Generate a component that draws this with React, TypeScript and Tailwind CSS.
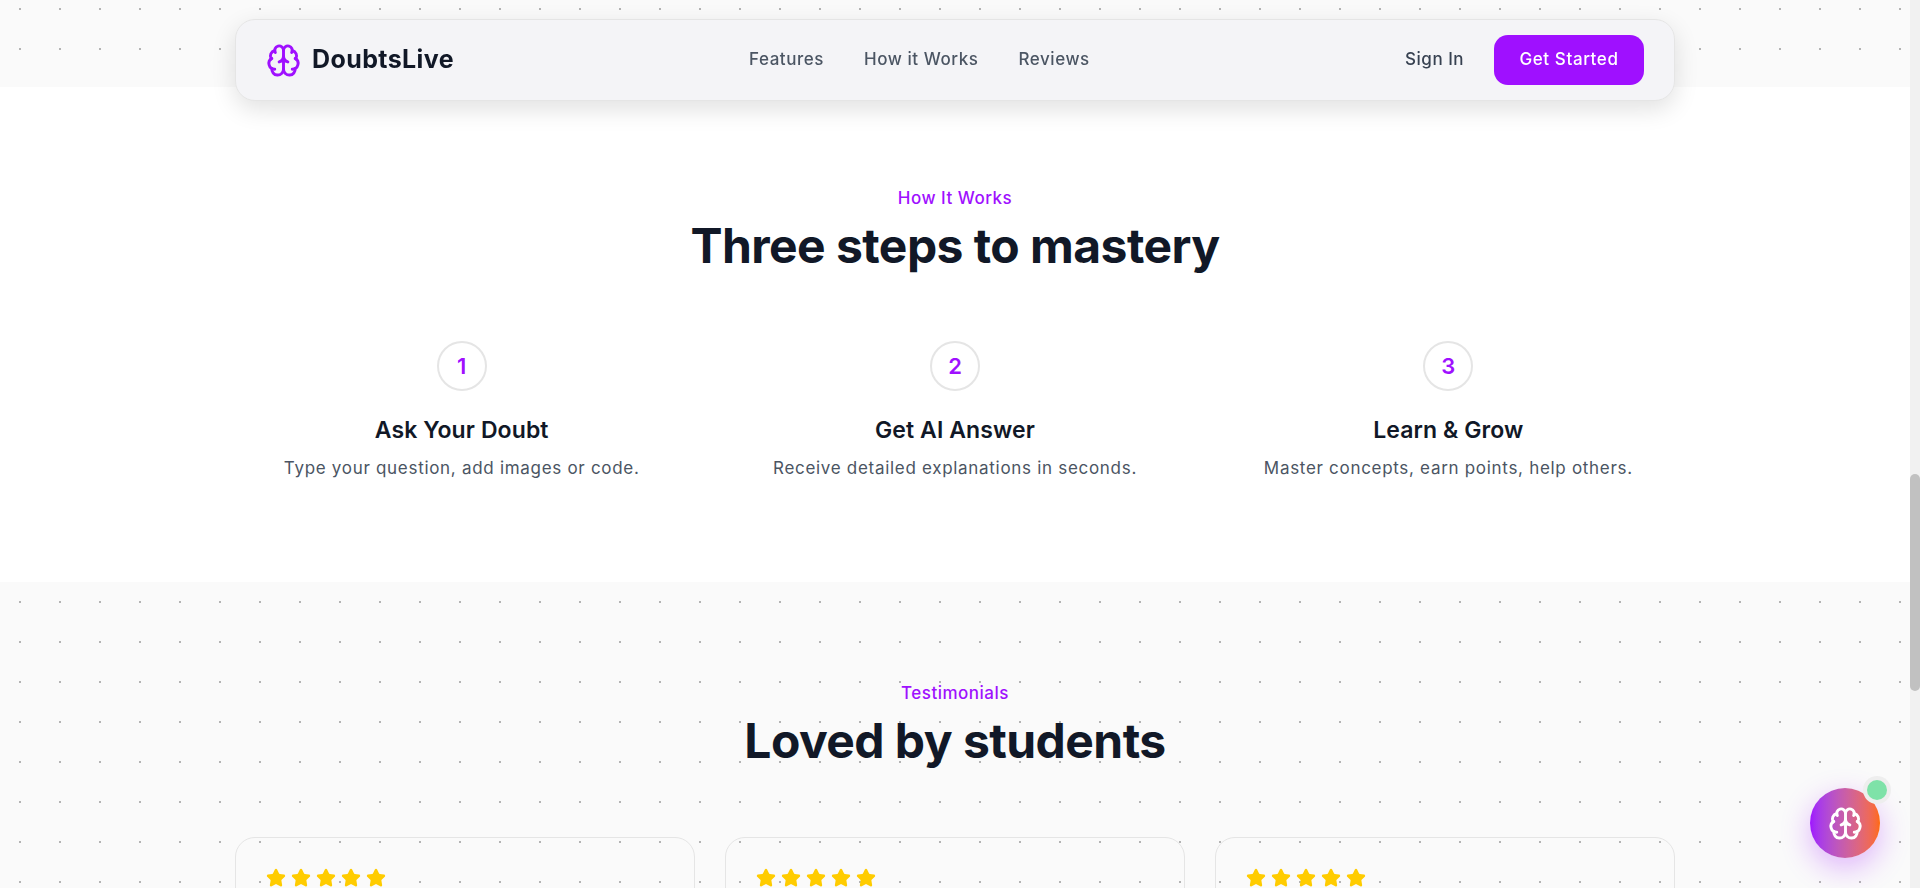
import React from 'react'
import { Brain, Star } from 'lucide-react'

const dots = "bg-[#fafafa] bg-[radial-gradient(circle,#b4b4b4_1.2px,transparent_1.2px)] bg-[size:40px_40px]"

const steps = [
    { n: '1', title: 'Ask Your Doubt', text: 'Type your question, add images or code.' },
    { n: '2', title: 'Get AI Answer', text: 'Receive detailed explanations in seconds.' },
    { n: '3', title: 'Learn & Grow', text: 'Master concepts, earn points, help others.' },
]

const Heading = ({ label, title }: { label: string; title: string }) => (
    <div className="flex flex-col items-center">
        <div className="text-[17px] leading-[24px] font-medium tracking-[0.5px] text-[#9f10ff]">{label}</div>
        <h2 className="mt-[6px] text-[48px] leading-[60px] font-bold tracking-[-0.55px] text-[#111827]">{title}</h2>
    </div>
)

const Navbar = () => (
    <nav className="fixed top-[19px] left-[235px] z-10 flex h-[82px] w-[1440px] items-center justify-between rounded-[20px] border border-[#e5e5e5] bg-[#f4f4f7] pr-[30px] pl-[30px] shadow-[0_8px_24px_rgba(0,0,0,0.12)]">
        <div className="flex items-center gap-[11px]">
            <Brain className="h-[35px] w-[35px] text-[#9f10ff]" strokeWidth={2} />
            <span className="text-[25px] font-bold tracking-[0.4px] text-[#111827]">DoubtsLive</span>
        </div>
        <div className="absolute left-[513px] flex items-center gap-[40px] text-[17px] font-medium tracking-[0.55px] text-[#4b5563]">
            <a>Features</a>
            <a>How it Works</a>
            <a>Reviews</a>
        </div>
        <div className="flex items-center gap-[30px]">
            <a className="text-[17px] font-medium tracking-[0.5px] text-[#374151]">Sign In</a>
            <button className="h-[50px] w-[150px] rounded-[14px] bg-[#9f10ff] text-[17px] font-medium tracking-[0.6px] text-white">Get Started</button>
        </div>
    </nav>
)

const App = () => {
    return (
        <div className="flex h-[888px] overflow-hidden bg-white font-['Inter',sans-serif]">
            <main className="relative w-[1910px] shrink-0">
                <Navbar />
                <div className={`${dots} h-[87px] bg-[position:0_-11px]`}></div>
                <section className="h-[495px] bg-white pt-[99px]">
                    <Heading label="How It Works" title="Three steps to mastery" />
                    <div className="mx-auto mt-[65px] grid w-[1440px] grid-cols-3 gap-10">
                        {steps.map(s => (
                            <div key={s.n} className="flex flex-col items-center">
                                <div className="flex h-[50px] w-[50px] items-center justify-center rounded-full border-2 border-[#e5e5e5] text-[22px] font-semibold text-[#9f10ff]">{s.n}</div>
                                <h3 className="mt-[23px] text-[23px] leading-[33px] font-semibold tracking-[0.1px] text-[#111827]">{s.title}</h3>
                                <p className="mt-[9px] text-[17px] leading-[24px] tracking-[0.7px] text-[#4b5563]">{s.text}</p>
                            </div>
                        ))}
                    </div>
                </section>
                <section className={`${dots} h-[306px] pt-[99px]`}>
                    <Heading label="Testimonials" title="Loved by students" />
                    <div className="mx-auto mt-[66px] grid w-[1440px] grid-cols-3 gap-[30px]">
                        {[0, 1, 2].map(i => (
                            <div key={i} className="h-[260px] rounded-[20px] border border-[#e5e5e5] p-[30px]">
                                <div className="flex gap-[5px]">
                                    {[0, 1, 2, 3, 4].map(j => (
                                        <Star key={j} className="h-[20px] w-[20px] fill-[#ffcc00] text-[#ffcc00]" />
                                    ))}
                                </div>
                            </div>
                        ))}
                    </div>
                </section>
                <button className="fixed right-[40px] bottom-[30px] z-10 flex h-[70px] w-[70px] items-center justify-center rounded-full bg-gradient-to-r from-[#9f10ff] to-[#ff6a00] text-white shadow-[0_10px_30px_rgba(159,16,255,0.3)]">
                    <Brain className="h-[35px] w-[35px]" strokeWidth={2} />
                    <span className="absolute top-[-8px] right-[-7px] h-[20px] w-[20px] rounded-full bg-[#7ee2a8] ring-4 ring-[#eeeeee]"></span>
                </button>
            </main>
            <div className="h-full w-[10px] shrink-0 bg-[#f1f1f1] pt-[474px]">
                <div className="h-[217px] rounded-[5px] bg-[#c1c1c1]"></div>
            </div>
        </div>
    )
}

export default App
